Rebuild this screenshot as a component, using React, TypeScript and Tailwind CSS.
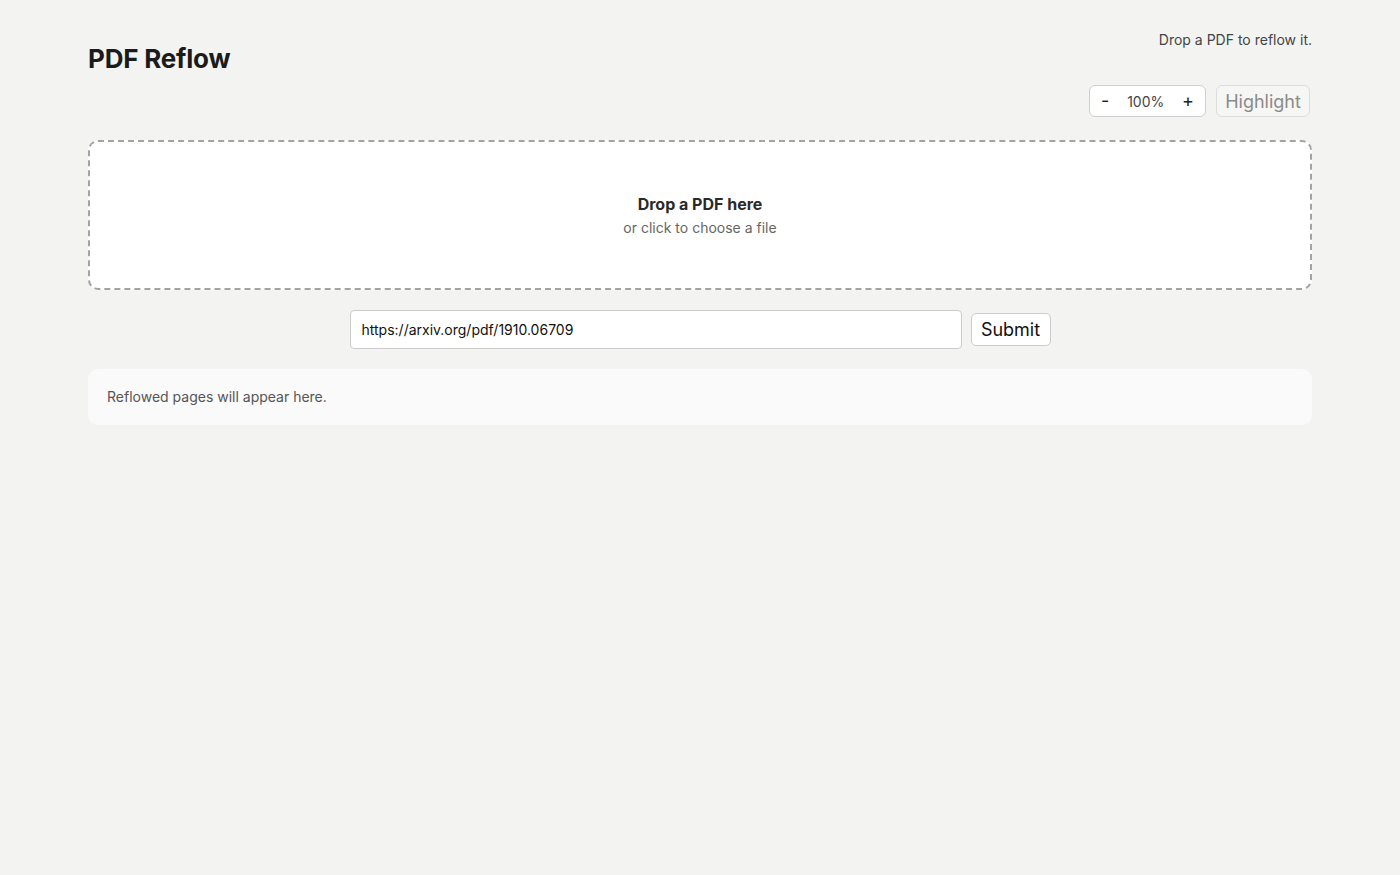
import { useState } from "react";

const font = { fontFamily: "Inter, 'Noto Sans', sans-serif" };

export default function App() {
  const [zoom, setZoom] = useState(100);
  const [url, setUrl] = useState("https://arxiv.org/pdf/1910.06709");

  return (
    <div className="min-h-screen bg-[#f3f4f2] text-[#222]" style={font}>
      <div className="mx-auto w-[1224px] pt-[30px]">
        <header className="flex justify-between">
          <h1 className="mt-[13px] text-[26px] font-bold leading-[32px] tracking-[-0.2px] text-[#1b1b1b]">
            PDF Reflow
          </h1>
          <div className="flex flex-col items-end">
            <p className="text-[14px] leading-[20px] text-[#444]">Drop a PDF to reflow it.</p>
            <div className="mt-[35px] mr-[2px] flex items-center gap-[10px]">
              <div className="box-border flex h-[32px] w-[117px] items-center justify-between rounded-[6px] border border-[#cfcfcf] bg-white px-[11px]">
                <button
                  className="text-[18px] leading-none text-[#222]"
                  onClick={() => setZoom((z) => Math.max(50, z - 10))}
                >
                  -
                </button>
                <span className="text-[14px] text-[#444]">{zoom}%</span>
                <button
                  className="text-[18px] leading-none text-[#222]"
                  onClick={() => setZoom((z) => z + 10)}
                >
                  +
                </button>
              </div>
              <button
                disabled
                className="box-border h-[32px] w-[94px] rounded-[6px] border border-[#dcdcdc] bg-[#f6f6f5] text-[18px] text-[#8a8a8a]"
              >
                Highlight
              </button>
            </div>
          </div>
        </header>

        <div className="mt-[23px] flex h-[150px] cursor-pointer flex-col items-center justify-center rounded-[10px] border-2 border-dashed border-[#a3a3a3] bg-white">
          <p className="text-[16px] font-bold leading-[22px] text-[#2a2a2a]">Drop a PDF here</p>
          <p className="mt-[3px] text-[14px] leading-[20px] text-[#666]">or click to choose a file</p>
        </div>

        <form
          className="mt-[20px] flex items-center justify-center gap-[9px]"
          onSubmit={(e) => e.preventDefault()}
        >
          <input
            value={url}
            onChange={(e) => setUrl(e.target.value)}
            className="h-[39px] w-[612px] rounded-[4px] border border-[#cccccc] bg-white px-[11px] text-[14px] text-[#111] outline-none"
          />
          <button
            type="submit"
            className="h-[33px] w-[80px] rounded-[5px] border border-[#cccccc] bg-white text-[18px] text-[#111]"
          >
            Submit
          </button>
        </form>

        <div className="mt-[20px] rounded-[10px] bg-[#fafafa] px-[19px] py-[18px]">
          <p className="text-[14px] leading-[20px] text-[#555]">Reflowed pages will appear here.</p>
        </div>
      </div>
    </div>
  );
}
